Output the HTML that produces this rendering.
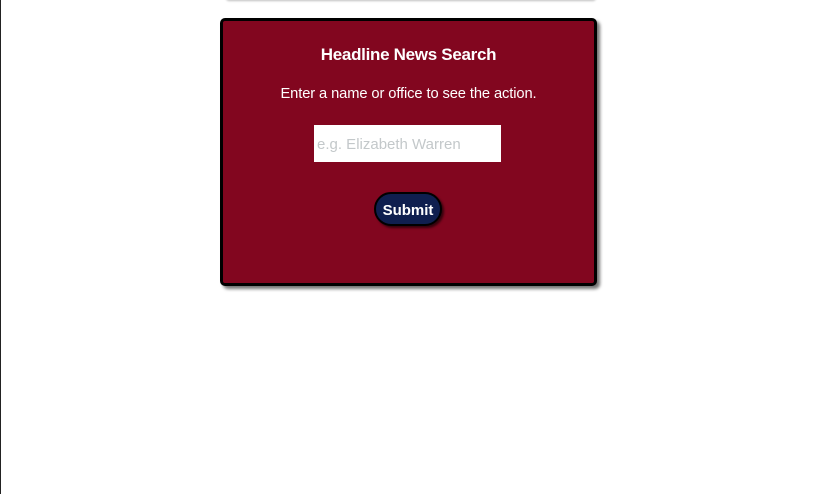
<!DOCTYPE html>
<html><head><style>
html,body{margin:0;padding:0;width:814px;height:494px;background:#fff;overflow:hidden;font-family:"Liberation Sans",sans-serif}
.lb{position:absolute;left:0;top:0;width:1px;height:494px;background:#222}
.top{position:absolute;left:226px;top:-4px;width:370px;height:4px;background:#fff;box-shadow:0 1px 2px rgba(0,0,0,.25);border-radius:0 0 3px 3px}
.box{position:absolute;left:220px;top:18px;width:371px;height:262px;background:#82061f;border:3px solid #000;border-radius:5px;box-shadow:3px 3px 3px rgba(0,0,0,.55);color:#fff;text-align:center}
h1{margin:0;position:absolute;top:24px;left:0;right:0;font-size:17px;font-weight:bold;letter-spacing:-0.3px}
p{margin:0;position:absolute;top:65px;left:0;right:0;font-size:14.7px;letter-spacing:-0.1px}
.in{position:absolute;left:91px;top:104px;width:187px;height:37px;background:#fff;color:#c3c8ca;font-size:15px;line-height:39px;text-align:left;padding-left:3px;box-sizing:border-box}
.btn{position:absolute;left:151px;top:171px;width:68px;height:34px;box-sizing:border-box;background:#0f1f4f;border:2px solid #000;border-radius:17px;box-shadow:2px 2px 2px rgba(0,0,0,.6);font-weight:bold;font-size:15px;line-height:33px}
</style></head><body>
<div class="lb"></div><div class="top"></div>
<div class="box">
<h1>Headline News Search</h1>
<p>Enter a name or office to see the action.</p>
<div class="in">e.g. Elizabeth Warren</div>
<div class="btn">Submit</div>
</div>
</body></html>
